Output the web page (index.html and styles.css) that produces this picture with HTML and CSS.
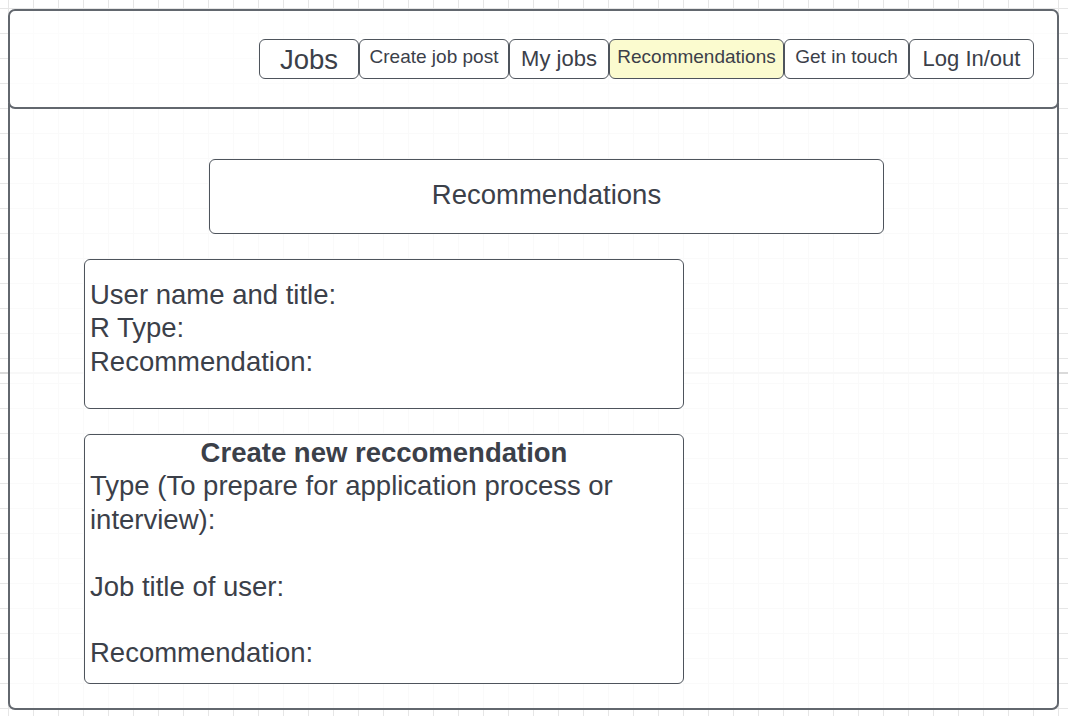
FILE: index.html
```html
<!DOCTYPE html>
<html lang="en">
<head>
<meta charset="utf-8">
<title>Recommendations</title>
<link rel="stylesheet" href="styles.css">
</head>
<body>
<div class="canvas">
  <div class="frame">
    <header class="topbar">
      <nav class="nav">
        <a class="nav-btn w100 fs-xl">Jobs</a>
        <a class="nav-btn w150 fs-s">Create job post</a>
        <a class="nav-btn w100 fs-m">My jobs</a>
        <a class="nav-btn w175 fs-s active">Recommendations</a>
        <a class="nav-btn w125 fs-s">Get in touch</a>
        <a class="nav-btn w125 fs-m">Log In/out</a>
      </nav>
    </header>
    <main class="content">
      <div class="title-box">Recommendations</div>
      <section class="card card-info">
        <p class="line">User name and title:</p>
        <p class="line">R Type:</p>
        <p class="line">Recommendation:</p>
      </section>
      <section class="card card-form">
        <h2 class="card-heading">Create new reccomendation</h2>
        <p class="line">Type (To prepare for application process or interview):</p>
        <p class="line blank">&nbsp;</p>
        <p class="line">Job title of user:</p>
        <p class="line blank">&nbsp;</p>
        <p class="line">Recommendation:</p>
      </section>
    </main>
  </div>
</div>
</body>
</html>
```

FILE: styles.css
```css
* {
  box-sizing: border-box;
}

html, body {
  margin: 0;
  padding: 0;
}

body {
  width: 1068px;
  height: 716px;
  overflow: hidden;
  font-family: "Liberation Sans", Arial, sans-serif;
  color: #3b4049;
  background-color: #ffffff;
  background-image:
    linear-gradient(to bottom, transparent 372px, #dadada 372px, #dadada 374px, transparent 374px),
    linear-gradient(to right, #e6e6e6 1px, transparent 1px),
    linear-gradient(to bottom, #e6e6e6 1px, transparent 1px);
  background-size: 100% 100%, 25px 25px, 25px 25px;
  background-position: 0 0, 8px 8px, 8px 8px;
  background-repeat: no-repeat, repeat, repeat;
}

.canvas {
  padding: 9px 0 0 8px;
}

.frame {
  width: 1051px;
  height: 701px;
  display: flex;
  flex-direction: column;
}

.topbar {
  position: relative;
  z-index: 1;
  height: 100px;
  border: 2px solid #62676e;
  border-radius: 7px;
  background: rgba(255, 255, 255, 0.85);
  display: flex;
  align-items: center;
  justify-content: flex-end;
  padding-right: 23px;
}

.nav {
  display: flex;
  align-items: center;
}

.nav-btn {
  height: 40px;
  display: flex;
  align-items: center;
  justify-content: center;
  border: 1px solid #4e545c;
  border-radius: 6px;
  background: #ffffff;
  color: #3b4049;
  white-space: nowrap;
  line-height: 1;
}

.w100 { width: 100px; }
.w125 { width: 125px; }
.w150 { width: 150px; }
.w175 { width: 175px; }

.fs-xl { font-size: 27.5px; padding-top: 2px; }
.fs-m { font-size: 22px; }
.fs-s { font-size: 19px; padding-bottom: 5px; }

.nav-btn.active {
  background: #fbfbcf;
}

.content {
  flex: 1;
  margin-top: -6px;
  border: 2px solid #62676e;
  border-top: none;
  border-radius: 0 0 7px 7px;
  background: rgba(255, 255, 255, 0.8);
  padding: 56px 0 0 0;
  display: flex;
  flex-direction: column;
  align-items: flex-start;
}

.title-box {
  margin-left: 199px;
  width: 675px;
  height: 75px;
  border: 1px solid #4e545c;
  border-radius: 6px;
  background: #ffffff;
  display: flex;
  align-items: center;
  justify-content: center;
  font-size: 27.5px;
  padding-bottom: 4px;
}

.card {
  margin-left: 74px;
  margin-top: 25px;
  width: 600px;
  border: 1px solid #4e545c;
  border-radius: 6px;
  background: #ffffff;
  font-size: 27.5px;
  line-height: 33.4px;
  padding: 0 5px;
}

.card-info {
  height: 150px;
  padding-top: 18px;
}

.card-form {
  height: 250px;
  padding-top: 1px;
}

.line {
  margin: 0;
}

.card-heading {
  margin: 0;
  font-size: 27.5px;
  line-height: 33.4px;
  font-weight: bold;
  text-align: center;
}
```
